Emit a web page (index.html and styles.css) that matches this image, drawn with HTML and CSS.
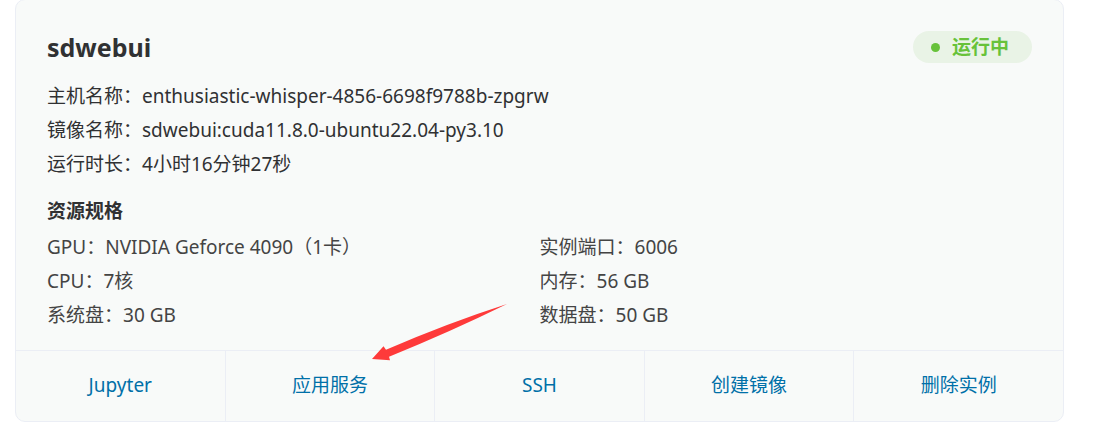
FILE: index.html
```html
<!DOCTYPE html>
<html lang="zh-CN">
<head>
<meta charset="utf-8">
<title>sdwebui</title>
<link rel="stylesheet" href="styles.css">
</head>
<body>
<main class="card">
  <section class="body">
    <header class="head">
      <h1 class="title">sdwebui</h1>
      <span class="status"><i class="dot"></i>运行中</span>
    </header>
    <dl class="info">
      <div class="row"><dt>主机名称：</dt><dd>enthusiastic-whisper-4856-6698f9788b-zpgrw</dd></div>
      <div class="row"><dt>镜像名称：</dt><dd>sdwebui:cuda11.8.0-ubuntu22.04-py3.10</dd></div>
      <div class="row"><dt>运行时长：</dt><dd>4小时16分钟27秒</dd></div>
    </dl>
    <h2 class="subtitle">资源规格</h2>
    <dl class="specs">
      <div class="row"><dt>GPU：</dt><dd>NVIDIA Geforce 4090（1卡）</dd></div>
      <div class="row"><dt>实例端口：</dt><dd>6006</dd></div>
      <div class="row"><dt>CPU：</dt><dd>7核</dd></div>
      <div class="row"><dt>内存：</dt><dd>56 GB</dd></div>
      <div class="row"><dt>系统盘：</dt><dd>30 GB</dd></div>
      <div class="row"><dt>数据盘：</dt><dd>50 GB</dd></div>
    </dl>
  </section>
  <nav class="actions">
    <button class="action" type="button">Jupyter</button>
    <button class="action" type="button">应用服务</button>
    <button class="action" type="button">SSH</button>
    <button class="action" type="button">创建镜像</button>
    <button class="action" type="button">删除实例</button>
  </nav>
  <svg class="arrow" width="136" height="58" viewBox="0 0 136 58" aria-hidden="true">
    <path d="M0 55L11.500 42.300L14 45.700Q76 19 135 0Q78 28 17 52.700L18 56.300Z" fill="#fe3a3a"/>
  </svg>
</main>
</body>
</html>
```
FILE: styles.css
```css
* {
  box-sizing: border-box;
}

body {
  margin: 0;
  background: #fff;
  color: #303133;
  font-family: "Noto Sans", "Noto Sans CJK SC", sans-serif;
  font-size: 19px;
  line-height: 34px;
}

.card {
  position: relative;
  margin: -1px 40px 0 15px;
  border: 1px solid #ebeef5;
  border-radius: 10px;
  background: #f8faf9;
}

.body {
  padding: 31px 31px 18px;
}

.head {
  display: flex;
  align-items: center;
  justify-content: space-between;
  margin-bottom: 16px;
}

.title {
  margin: 0;
  font-size: 25px;
  line-height: 32px;
}

.status {
  display: flex;
  align-items: center;
  gap: 12px;
  padding: 0 23px 0 18px;
  border-radius: 16px;
  background: #e9f3e6;
  color: #67c23a;
  font-weight: 700;
  line-height: 32px;
}

.dot {
  width: 9px;
  height: 9px;
  border-radius: 50%;
  background: #67c23a;
}

.info,
.specs {
  margin: 0;
}

.row {
  display: flex;
}

.row dt,
.row dd {
  margin: 0;
}

.subtitle {
  margin: 13px 0 2px;
  font-size: 19px;
}

.specs {
  display: grid;
  grid-template-columns: 1fr 1fr;
  color: #444;
}

.actions {
  display: flex;
  border-top: 1px solid #ebeef5;
}

.action {
  flex: 1;
  height: 70px;
  padding: 0 0 2px;
  border: 0;
  border-right: 1px solid #ebeef5;
  background: none;
  color: #0070a8;
  font: inherit;
  cursor: pointer;
}

.action:last-child {
  border-right: 0;
}

.arrow {
  position: absolute;
  left: 356px;
  bottom: 59px;
}
```
